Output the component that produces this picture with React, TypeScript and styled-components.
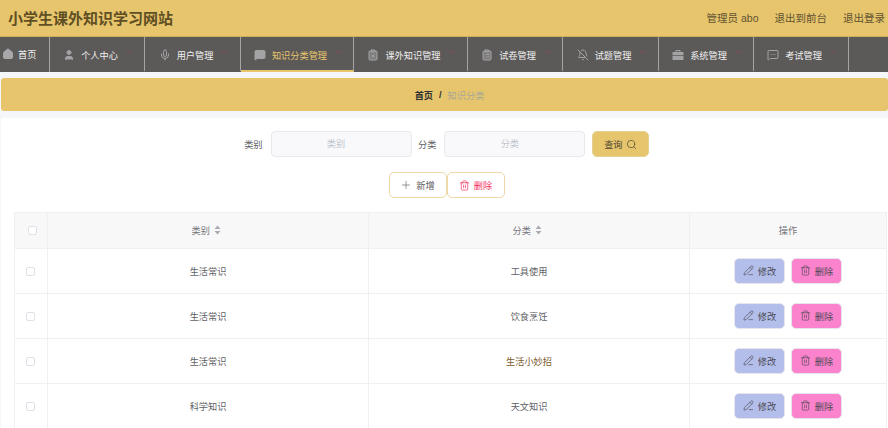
import React from "react";
import styled, { createGlobalStyle } from "styled-components";
import {
  House,
  User,
  Mic,
  MessageSquare,
  ClipboardX,
  ClipboardList,
  BellOff,
  MessageSquareMore,
  ChevronDown,
  Search,
  Plus,
  Trash2,
  PencilLine,
} from "lucide-react";

const Global = createGlobalStyle`
  html, body {
    margin: 0;
    padding: 0;
    width: 888px;
    height: 428px;
    overflow: hidden;
    background: #f4f6fa;
    font-family: "Liberation Sans", "Noto Sans CJK SC", sans-serif;
  }
  * { box-sizing: border-box; }
`;

const SolidCase = ({ size }: { size?: number; color?: string; fill?: string }) => (
  <svg width={size} height={size} viewBox="0 0 12 12">
    <path d="M4 3V1.5h4V3" fill="none" stroke="#a3a3a6" />
    <path d="M0.5 3h11v3.2h-11zM0.5 7h11v4h-11z" fill="#a3a3a6" />
  </svg>
);

const navItems = [
  { label: "个人中心", icon: User, width: 95, fill: "#a3a3a6" },
  { label: "用户管理", icon: Mic, width: 96, fill: "none" },
  { label: "知识分类管理", icon: MessageSquare, width: 113, active: true, fill: "#a3a3a6" },
  { label: "课外知识管理", icon: ClipboardX, width: 114, fill: "rgba(163,163,166,0.45)" },
  { label: "试卷管理", icon: ClipboardList, width: 95, fill: "rgba(163,163,166,0.45)" },
  { label: "试题管理", icon: BellOff, width: 96, fill: "none" },
  { label: "系统管理", icon: SolidCase, width: 95, fill: "none" },
  { label: "考试管理", icon: MessageSquareMore, width: 95, fill: "none" },
];

const rows = [
  { type: "生活常识", name: "工具使用" },
  { type: "生活常识", name: "饮食烹饪" },
  { type: "生活常识", name: "生活小妙招", warm: true },
  { type: "科学知识", name: "天文知识" },
];

const App = () => {
  return (
    <Page>
      <Global />
      <Header>
        <Title>小学生课外知识学习网站</Title>
        <HeaderLinks>
          <span>管理员 abo</span>
          <span>退出到前台</span>
          <span>退出登录</span>
        </HeaderLinks>
      </Header>
      <Nav>
        <HomeItem>
          <House size={12} fill="#a8a8aa" stroke="#a8a8aa" />
          首页
        </HomeItem>
        {navItems.map((item) => (
          <NavItem key={item.label} $width={item.width} $active={item.active}>
            <item.icon size={12} color="#a3a3a6" fill={item.fill} />
            <span>{item.label}</span>
            <NavArrow size={9} color="#94446f" />
          </NavItem>
        ))}
      </Nav>
      <Breadcrumb>
        <strong>首页</strong>
        <Slash>/</Slash>
        <em>知识分类</em>
      </Breadcrumb>
      <Content>
        <SearchRow>
          <Label>类别</Label>
          <Field placeholder="类别" />
          <Label>分类</Label>
          <Field placeholder="分类" />
          <QueryButton>
            查询 <Search size={11} strokeWidth={1.5} />
          </QueryButton>
        </SearchRow>
        <ActionRow>
          <OutlineButton>
            <Plus size={12} color="#77737a" strokeWidth={1.5} /> 新增
          </OutlineButton>
          <OutlineButton $danger>
            <Trash2 size={11} strokeWidth={1.5} /> 删除
          </OutlineButton>
        </ActionRow>
        <Table>
          <colgroup>
            <col style={{ width: 33 }} />
            <col style={{ width: 321 }} />
            <col style={{ width: 321 }} />
            <col style={{ width: 197 }} />
          </colgroup>
          <thead>
            <tr>
              <Th><Check $shift={1} /></Th>
              <Th>类别 <SortMark /></Th>
              <Th>分类 <SortMark /></Th>
              <Th>操作</Th>
            </tr>
          </thead>
          <tbody>
            {rows.map((row) => (
              <tr key={row.name}>
                <Td><Check $shift={-1} /></Td>
                <Td>{row.type}</Td>
                <Td $warm={row.warm}>{row.name}</Td>
                <Td>
                  <RowActions>
                    <RowButton $bg="#b3bfea">
                      <PencilLine size={11} strokeWidth={1.4} /> 修改
                    </RowButton>
                    <RowButton $bg="#fb82cc">
                      <Trash2 size={11} strokeWidth={1.4} /> 删除
                    </RowButton>
                  </RowActions>
                </Td>
              </tr>
            ))}
          </tbody>
        </Table>
      </Content>
    </Page>
  );
};

export default App;

const SortMark = () => (
  <SortIcon width="7" height="10" viewBox="0 0 7 10">
    <path d="M3.5 0.5 L6.5 4 H0.5 Z M3.5 9.5 L0.5 6 H6.5 Z" fill="#a8abb2" />
  </SortIcon>
);

const Page = styled.div`
  width: 888px;
  height: 428px;
  overflow: hidden;
  display: flex;
  flex-direction: column;
`;

const Header = styled.header`
  height: 37px;
  flex: none;
  background: #e7c56d;
  border-bottom: 1px solid #cfae5c;
  display: flex;
  align-items: center;
  justify-content: space-between;
  padding: 0 3px 2px 8px;
`;

const Title = styled.h1`
  margin: 0;
  font-size: 15px;
  font-weight: 700;
  color: #5f4f23;
`;

const HeaderLinks = styled.div`
  display: flex;
  gap: 16px;
  font-size: 10.5px;
  color: #5f5230;
`;

const Nav = styled.nav`
  height: 35px;
  flex: none;
  background: #5c5a58;
  display: flex;
`;

const HomeItem = styled.div`
  width: 50px;
  flex: none;
  display: flex;
  align-items: center;
  gap: 4px;
  padding: 0 0 2px 2px;
  font-size: 9.2px;
  color: #f0f0f0;
  border-right: 1px solid #a5a5a5;
`;

const NavItem = styled.div<{ $width: number; $active?: boolean }>`
  width: ${(p) => p.$width}px;
  flex: none;
  display: flex;
  align-items: center;
  justify-content: center;
  gap: 6px;
  padding: 2px 0 0 3px;
  font-size: 9.2px;
  color: ${(p) => (p.$active ? "#e7c56d" : "#f0f0f0")};
  border-right: 1px solid #a5a5a5;
  border-bottom: 2px solid ${(p) => (p.$active ? "#e7c56d" : "transparent")};
`;

const NavArrow = styled(ChevronDown)`
  margin: -4px 0 0 1px;
`;

const Breadcrumb = styled.div`
  height: 33px;
  flex: none;
  margin: 6px 0 7px 1px;
  padding-left: 10px;
  background: #e7c56d;
  border-radius: 3px;
  display: flex;
  align-items: center;
  justify-content: center;
  font-size: 9.2px;

  strong {
    color: #303133;
    font-weight: 700;
  }
  em {
    color: #a8a895;
    font-style: normal;
  }
`;

const Slash = styled.span`
  margin: 0 6px;
  color: #303133;
  font-weight: 700;
`;

const Content = styled.main`
  flex: 1;
  margin-left: 1px;
  background: #fff;
  padding: 13px 2px 0 13px;
  min-height: 0;
`;

const SearchRow = styled.div`
  display: flex;
  justify-content: center;
  align-items: center;
  padding-right: 7px;
  height: 26px;
`;

const Label = styled.label`
  font-size: 9.2px;
  color: #606266;
  margin-right: 8px;
`;

const Field = styled.input`
  width: 141px;
  height: 26px;
  margin-right: 6.5px;
  padding: 0 10px 0 0;
  background: #f9f9fb;
  border: 1px solid #e8e9ee;
  border-radius: 4px;
  text-align: center;
  font: inherit;
  font-size: 9.2px;

  &::placeholder {
    color: #c0c4cc;
  }
`;

const QueryButton = styled.button`
  height: 26px;
  width: 57px;
  padding: 0;
  background: #e7c56d;
  border: 1px solid #e5cf95;
  border-radius: 5px;
  color: #4c4530;
  font: inherit;
  font-size: 9.2px;
  display: flex;
  align-items: center;
  justify-content: center;
  gap: 3px;
`;

const ActionRow = styled.div`
  display: flex;
  justify-content: center;
  margin-top: 15px;
  padding-right: 7px;
`;

const OutlineButton = styled.button<{ $danger?: boolean }>`
  width: 58px;
  height: 26px;
  padding: 0;
  background: #fff;
  border: 1px solid #ecd9a6;
  border-radius: 5px;
  color: ${(p) => (p.$danger ? "#f5325f" : "#5d5a5a")};
  font: inherit;
  font-size: 9.2px;
  display: flex;
  align-items: center;
  justify-content: center;
  gap: 4px;
`;

const Table = styled.table`
  margin-top: 14px;
  width: 872px;
  table-layout: fixed;
  border-collapse: collapse;
  font-size: 9.2px;
`;

const Th = styled.th`
  height: 36px;
  padding: 0 0 2px;
  background: #f9f8f9;
  border: 1px solid #f0f0f4;
  color: #75757a;
  font-weight: 400;
  text-align: center;
`;

const Td = styled.td<{ $warm?: boolean }>`
  height: 45px;
  padding: 0 0 1px;
  border: 1px solid #f0f0f4;
  color: ${(p) => (p.$warm ? "#7a5a2e" : "#606266")};
  text-align: center;
`;

const SortIcon = styled.svg`
  margin: 0 3px 0 2px;
  vertical-align: -1px;
`;

const Check = styled.span<{ $shift: number }>`
  display: inline-block;
  width: 9px;
  height: 9px;
  vertical-align: middle;
  margin-left: ${(p) => (p.$shift > 0 ? 2 : 0)}px;
  margin-right: ${(p) => (p.$shift < 0 ? 2 : 0)}px;
  background: #fff;
  border: 1px solid #dfe1e8;
  border-radius: 2px;
`;

const RowActions = styled.div`
  display: flex;
  justify-content: center;
  gap: 6px;
`;

const RowButton = styled.button<{ $bg: string }>`
  width: 51px;
  height: 26px;
  padding: 0;
  background: ${(p) => p.$bg};
  border: 1px solid #e9e4ee;
  border-radius: 5px;
  color: #4c4a55;
  font: inherit;
  font-size: 9.2px;
  display: flex;
  align-items: center;
  justify-content: center;
  gap: 4px;
`;
